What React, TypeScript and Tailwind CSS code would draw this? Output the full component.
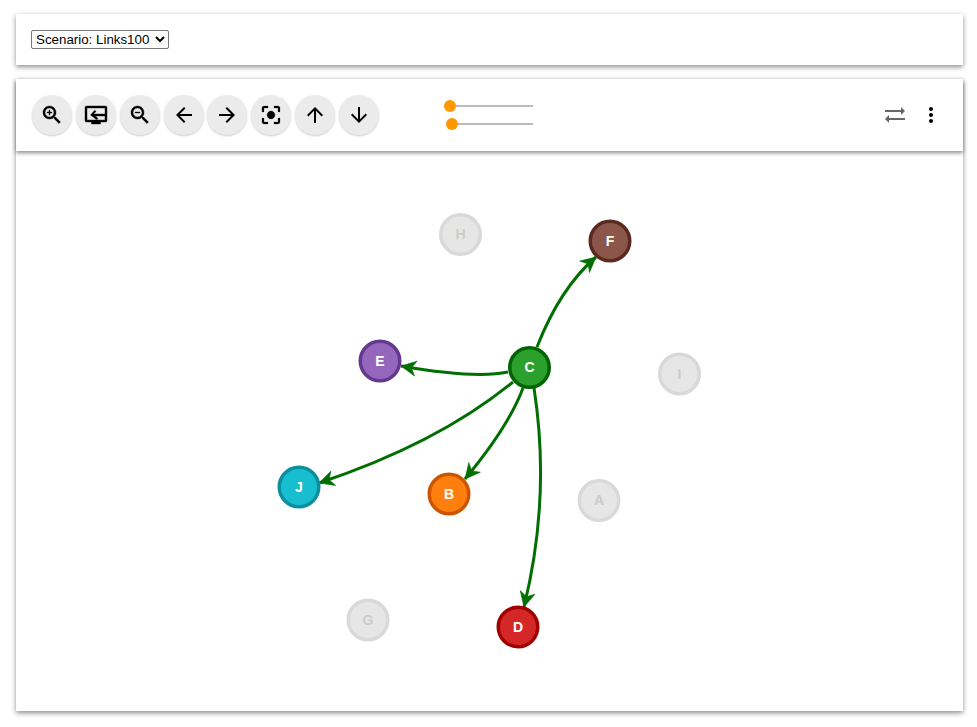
const ZOOM_GLASS = "M15.5 14h-.79l-.28-.27C15.41 12.59 16 11.11 16 9.5 16 5.91 13.09 3 9.5 3S3 5.91 3 9.5 5.91 16 9.5 16c1.61 0 3.09-.59 4.23-1.57l.27.28v.79l5 4.99L20.49 19l-4.99-5zm-6 0C7.01 14 5 11.99 5 9.5S7.01 5 9.5 5 14 7.01 14 9.5 11.99 14 9.5 14z";

const toolbarIcons = [
  { name: "zoom-in", weight: 0.4, d: ZOOM_GLASS + "M12 10h-2v2H9v-2H7V9h2V7h1v2h2v1z" },
  { name: "fit", weight: 0.4, d: "M2.500 3h19A1.500 1.500 0 0 1 23 4.500v13a1.500 1.500 0 0 1-1.500 1.500h-5v2h-9v-2h-5A1.500 1.500 0 0 1 1 17.500v-13A1.500 1.500 0 0 1 2.500 3zM3 5v12h18v-4h-9.500l2.500 2.600-1.300 1.200L6.500 12l4.200-4.800L12 8.400 9.500 11H21V5z" },
  { name: "zoom-out", weight: 0.4, d: ZOOM_GLASS + "M7 9h5v1H7z" },
  { name: "back", weight: 0, d: "M20 11H7.83l5.59-5.59L12 4l-8 8 8 8 1.41-1.41L7.83 13H20v-2z" },
  { name: "forward", weight: 0, d: "M12 4l-1.41 1.41L16.17 11H4v2h12.17l-5.58 5.59L12 20l8-8z" },
  { name: "focus", weight: 0.2, d: "M12 8c-2.21 0-4 1.79-4 4s1.79 4 4 4 4-1.79 4-4-1.79-4-4-4zm-7 7H3v4c0 1.1.9 2 2 2h4v-2H5v-4zM5 5h4V3H5c-1.1 0-2 .9-2 2v4h2V5zm14-2h-4v2h4v4h2V5c0-1.1-.9-2-2-2zm0 16h-4v2h4c1.1 0 2-.9 2-2v-4h-2v4z" },
  { name: "up", weight: 0, d: "M4 12l1.41 1.41L11 7.83V20h2V7.83l5.58 5.59L20 12l-8-8-8 8z" },
  { name: "down", weight: 0, d: "M20 12l-1.41-1.41L13 16.17V4h-2v12.17l-5.58-5.59L4 12l8 8 8-8z" },
];

const nodes = [
  { id: "H", x: 460.5, y: 234.5, fill: "#e6e6e6", stroke: "#d9d9d9", text: "#cccccc" },
  { id: "F", x: 610, y: 241, fill: "#8c564b", stroke: "#5a2a20", text: "#ffffff" },
  { id: "E", x: 380, y: 361, fill: "#9467bd", stroke: "#64398f", text: "#ffffff" },
  { id: "C", x: 529.5, y: 367.5, fill: "#2ca02c", stroke: "#006400", text: "#ffffff" },
  { id: "I", x: 679.5, y: 374, fill: "#e6e6e6", stroke: "#d9d9d9", text: "#cccccc" },
  { id: "J", x: 299, y: 487, fill: "#17becf", stroke: "#0b8fa0", text: "#ffffff" },
  { id: "B", x: 449, y: 494, fill: "#ff7f0e", stroke: "#cc5500", text: "#ffffff" },
  { id: "A", x: 599, y: 500.5, fill: "#e6e6e6", stroke: "#d9d9d9", text: "#cccccc" },
  { id: "G", x: 368, y: 620, fill: "#e6e6e6", stroke: "#d9d9d9", text: "#cccccc" },
  { id: "D", x: 518, y: 627, fill: "#d62728", stroke: "#a00000", text: "#ffffff" },
];

const edges = [
  "M537 347Q560 288 596 257",
  "M508 372Q475.5 379 401 366",
  "M513 382Q438 443.5 319 483",
  "M523 388Q509 426 465 479",
  "M534 388Q551 497 524 607",
];

export default function App() {
  return (
    <div className="bg-white h-[727px] pl-4 pr-[14px] pt-[14px] flex flex-col gap-[14px] font-['Liberation_Sans',Arial,sans-serif] overflow-hidden">
      <div className="h-[51px] flex items-center pl-[15px] bg-white shadow-[0_2px_5px_rgba(0,0,0,0.45)]">
        <select className="h-[19px] w-[138px] text-[13.33px] leading-none text-black bg-white border border-[#767676] rounded-[2px] appearance-auto" defaultValue="Links100">
          <option value="Links100">Scenario: Links100</option>
        </select>
      </div>

      <div className="h-[632px] flex flex-col bg-white shadow-[0_2px_5px_rgba(0,0,0,0.45)]">
        <div className="h-[72px] shrink-0 flex items-center pl-4 pr-5 bg-white shadow-[0_2px_4px_rgba(0,0,0,0.45)] relative">
          <div className="flex gap-[3.85px]">
            {toolbarIcons.map(icon => (
              <button key={icon.name} className="w-10 h-10 rounded-full bg-[#ebebeb] flex items-center justify-center shadow-[0_1px_2px_rgba(0,0,0,0.2)]">
                <svg width="24" height="24" viewBox="0 0 24 24" fill="#000000">
                  <path d={icon.d} fillRule="evenodd" stroke="#000000" strokeWidth={icon.weight} />
                </svg>
              </button>
            ))}
          </div>

          <div className="ml-[65px] w-[89px] flex flex-col gap-4">
            <div className="relative h-[2px] bg-[#bbbbbb]">
              <span className="absolute left-0 -top-[5px] w-3 h-3 rounded-full bg-[#ff9800]" />
            </div>
            <div className="relative h-[2px] ml-[2px] bg-[#bbbbbb]">
              <span className="absolute left-0 -top-[5px] w-3 h-3 rounded-full bg-[#ff9800]" />
            </div>
          </div>

          <div className="ml-auto flex items-center gap-3">
            <svg width="24" height="24" viewBox="0 0 24 24" fill="#666666">
              <path d="M2 16 6 12v3h16v2H6v3z" />
              <path d="M22 8 18 4v3H2v2h16v3z" />
            </svg>
            <svg width="24" height="24" viewBox="0 0 24 24" fill="#000000">
              <path d="M12 8c1.1 0 2-.9 2-2s-.9-2-2-2-2 .9-2 2 .9 2 2 2zm0 2c-1.1 0-2 .9-2 2s.9 2 2 2 2-.9 2-2-.9-2-2-2zm0 6c-1.1 0-2 .9-2 2s.9 2 2 2 2-.9 2-2-.9-2-2-2z" />
            </svg>
          </div>
        </div>

        <svg className="flex-1 w-full block" viewBox="16 151 947 560">
          <defs>
            <marker id="head" markerUnits="userSpaceOnUse" markerWidth="20" markerHeight="20" refX="16" refY="10" orient="auto">
              <path d="M1 2.500 16 10 1 17.500 5.500 10z" fill="#006e00" stroke="#006e00" strokeWidth="0.6" />
            </marker>
          </defs>
          {edges.map(d => (
            <path key={d} d={d} fill="none" stroke="#006e00" strokeWidth="3" markerEnd="url(#head)" />
          ))}
          {nodes.map(n => (
            <g key={n.id}>
              <circle cx={n.x} cy={n.y} r="19.75" fill={n.fill} stroke={n.stroke} strokeWidth="3.5" />
              <text x={n.x} y={n.y + 4.5} textAnchor="middle" fontSize="14" fontWeight="700" fill={n.text}>{n.id}</text>
            </g>
          ))}
        </svg>
      </div>
    </div>
  );
}
